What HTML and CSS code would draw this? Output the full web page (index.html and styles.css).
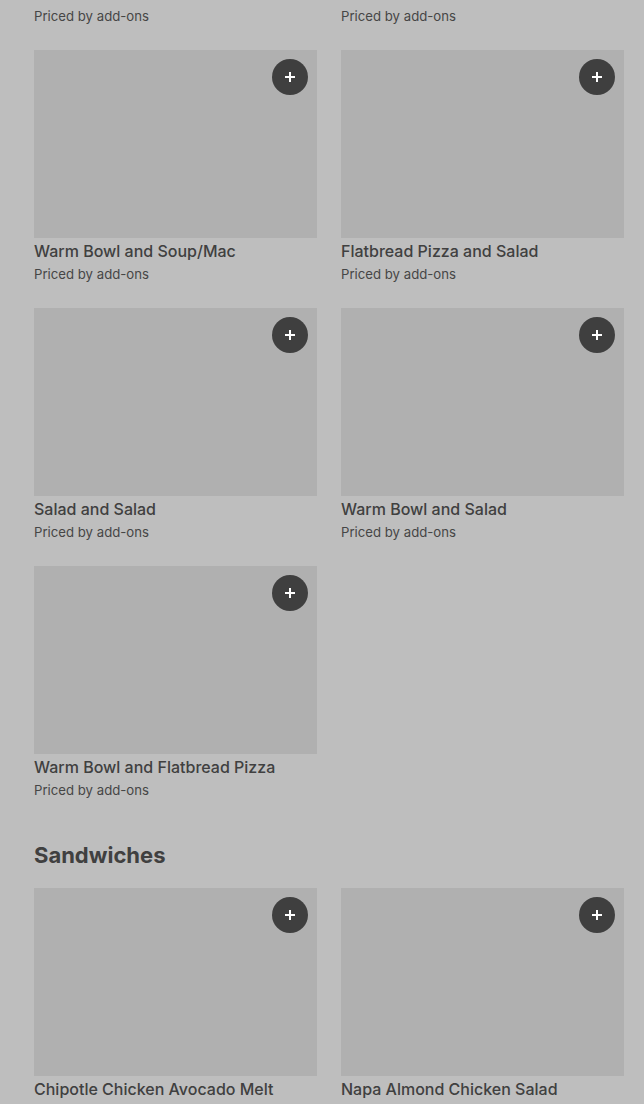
FILE: index.html
```html
<!DOCTYPE html>
<html lang="en">
<head>
<meta charset="utf-8">
<title>Menu</title>
<link rel="stylesheet" href="styles.css">
</head>
<body>
<main class="page">
  <div class="grid">
    <div class="item item-cut"><p class="price">Priced by add-ons</p></div>
    <div class="item item-cut"><p class="price">Priced by add-ons</p></div>

    <div class="item">
      <div class="thumb"><button class="add" aria-label="Add"><svg viewBox="0 0 12 12" width="12" height="12"><path d="M6 1v10M1 6h10" stroke="#fff" stroke-width="2"/></svg></button></div>
      <h3 class="name">Warm Bowl and Soup/Mac</h3>
      <p class="price">Priced by add-ons</p>
    </div>
    <div class="item">
      <div class="thumb"><button class="add" aria-label="Add"><svg viewBox="0 0 12 12" width="12" height="12"><path d="M6 1v10M1 6h10" stroke="#fff" stroke-width="2"/></svg></button></div>
      <h3 class="name">Flatbread Pizza and Salad</h3>
      <p class="price">Priced by add-ons</p>
    </div>

    <div class="item">
      <div class="thumb"><button class="add" aria-label="Add"><svg viewBox="0 0 12 12" width="12" height="12"><path d="M6 1v10M1 6h10" stroke="#fff" stroke-width="2"/></svg></button></div>
      <h3 class="name">Salad and Salad</h3>
      <p class="price">Priced by add-ons</p>
    </div>
    <div class="item">
      <div class="thumb"><button class="add" aria-label="Add"><svg viewBox="0 0 12 12" width="12" height="12"><path d="M6 1v10M1 6h10" stroke="#fff" stroke-width="2"/></svg></button></div>
      <h3 class="name">Warm Bowl and Salad</h3>
      <p class="price">Priced by add-ons</p>
    </div>

    <div class="item">
      <div class="thumb"><button class="add" aria-label="Add"><svg viewBox="0 0 12 12" width="12" height="12"><path d="M6 1v10M1 6h10" stroke="#fff" stroke-width="2"/></svg></button></div>
      <h3 class="name">Warm Bowl and Flatbread Pizza</h3>
      <p class="price">Priced by add-ons</p>
    </div>
  </div>

  <h2 class="section">Sandwiches</h2>

  <div class="grid">
    <div class="item">
      <div class="thumb"><button class="add" aria-label="Add"><svg viewBox="0 0 12 12" width="12" height="12"><path d="M6 1v10M1 6h10" stroke="#fff" stroke-width="2"/></svg></button></div>
      <h3 class="name">Chipotle Chicken Avocado Melt</h3>
      <p class="price">Priced by add-ons</p>
    </div>
    <div class="item">
      <div class="thumb"><button class="add" aria-label="Add"><svg viewBox="0 0 12 12" width="12" height="12"><path d="M6 1v10M1 6h10" stroke="#fff" stroke-width="2"/></svg></button></div>
      <h3 class="name">Napa Almond Chicken Salad Sandwich</h3>
      <p class="price">Priced by add-ons</p>
    </div>
  </div>
</main>
</body>
</html>
```

FILE: styles.css
```css
* { box-sizing: border-box; }

html, body {
  margin: 0;
  padding: 0;
  background: #bebebe;
  font-family: Inter, Roboto, "Liberation Sans", sans-serif;
  color: #404040;
}

.page {
  padding: 5px 20px 0 34px;
}

.grid {
  display: grid;
  grid-template-columns: 283px 283px;
  column-gap: 24px;
  row-gap: 23px;
}

.item {
  display: flex;
  flex-direction: column;
}

.thumb {
  position: relative;
  height: 188px;
  background: #b0b0b0;
  margin-bottom: 1px;
}

.add {
  position: absolute;
  top: 9px;
  right: 9px;
  width: 36px;
  height: 36px;
  border-radius: 50%;
  border: none;
  padding: 0;
  background: #3f3f3f;
  display: flex;
  align-items: center;
  justify-content: center;
}

.name {
  margin: 0;
  font-size: 16px;
  line-height: 24px;
  font-weight: 500;
  color: #404040;
}

.price {
  margin: 0;
  font-size: 13.2px;
  line-height: 22px;
  font-weight: 400;
  color: #464646;
}

.section {
  margin: 38px 0 17px;
  font-size: 22px;
  line-height: 32px;
  font-weight: 700;
  color: #404040;
}
```
